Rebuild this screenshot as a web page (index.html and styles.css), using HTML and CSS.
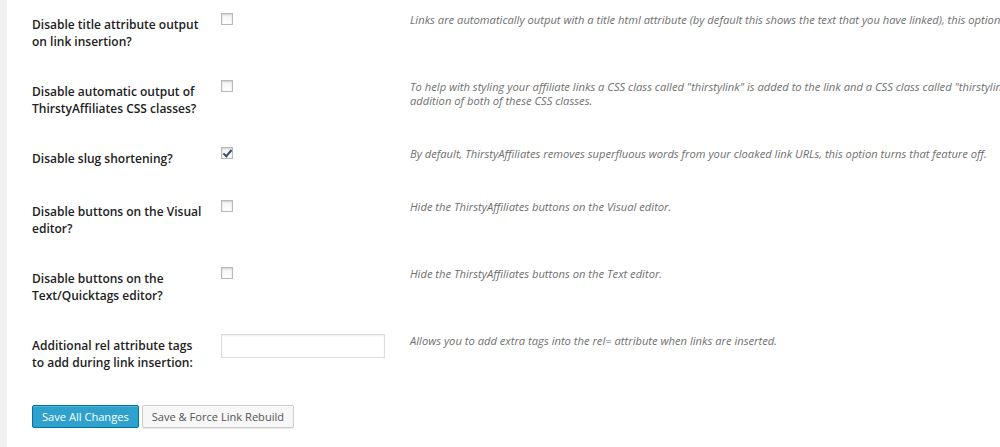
FILE: index.html
```html
<!DOCTYPE html>
<html lang="en">
<head>
<meta charset="utf-8">
<title>ThirstyAffiliates Settings</title>
<link rel="stylesheet" href="styles.css">
</head>
<body>
<div class="page">
  <div class="settings">
    <div class="row">
      <div class="label">Disable title attribute output on link insertion?</div>
      <div class="control"><input class="check" type="checkbox"></div>
      <div class="desc"><span class="line">Links are automatically output with a title html attribute (by default this shows the text that you have linked), this option lets you disable the output of the title attribute on your links.</span></div>
    </div>
    <div class="row">
      <div class="label">Disable automatic output of ThirstyAffiliates CSS classes?</div>
      <div class="control"><input class="check" type="checkbox"></div>
      <div class="desc"><span class="line">To help with styling your affiliate links a CSS class called "thirstylink" is added to the link and a CSS class called "thirstylinkimg" is added to images within the link. This option disables the</span><span class="line">addition of both of these CSS classes.</span></div>
    </div>
    <div class="row">
      <div class="label">Disable slug shortening?</div>
      <div class="control"><input class="check" type="checkbox" checked></div>
      <div class="desc"><span class="line">By default, ThirstyAffiliates removes superfluous words from your cloaked link URLs, this option turns that feature off.</span></div>
    </div>
    <div class="row">
      <div class="label">Disable buttons on the Visual editor?</div>
      <div class="control"><input class="check" type="checkbox"></div>
      <div class="desc"><span class="line">Hide the ThirstyAffiliates buttons on the Visual editor.</span></div>
    </div>
    <div class="row">
      <div class="label">Disable buttons on the Text/Quicktags editor?</div>
      <div class="control"><input class="check" type="checkbox"></div>
      <div class="desc"><span class="line">Hide the ThirstyAffiliates buttons on the Text editor.</span></div>
    </div>
    <div class="row">
      <div class="label">Additional rel attribute tags to add during link insertion:</div>
      <div class="control"><input class="text-input" type="text"></div>
      <div class="desc"><span class="line">Allows you to add extra tags into the rel= attribute when links are inserted.</span></div>
    </div>
  </div>
  <div class="actions">
    <button class="btn btn-primary" type="button">Save All Changes</button>
    <button class="btn btn-secondary" type="button">Save &amp; Force Link Rebuild</button>
  </div>
</div>
</body>
</html>
```

FILE: styles.css
```css
html, body {
  margin: 0;
  padding: 0;
  height: 100%;
  overflow: hidden;
}

body {
  background: #f1f1f1;
  font-family: "Open Sans", "Liberation Sans", sans-serif;
  color: #222;
}

.page {
  margin-left: 7px;
  background: #fff;
  height: 100%;
  padding-left: 25px;
  box-sizing: border-box;
}

.row {
  display: grid;
  grid-template-columns: 189px 189px 1fr;
  align-items: start;
  min-height: 53px;
  box-sizing: border-box;
  padding-bottom: 17px;
}

.label {
  padding-top: 16px;
  padding-right: 16px;
  font-size: 12px;
  font-weight: 600;
  line-height: 17px;
  color: #222;
}

.control {
  padding-top: 13px;
}

.check {
  appearance: none;
  -webkit-appearance: none;
  display: block;
  margin: 0;
  width: 12px;
  height: 12px;
  border: 1px solid #b4b9be;
  background: linear-gradient(#f4f4f4, #fff);
  box-shadow: inset 0 1px 2px rgba(0, 0, 0, 0.15);
  box-sizing: border-box;
  position: relative;
}

.check:checked::before {
  content: "";
  position: absolute;
  left: 3px;
  top: 0px;
  width: 3px;
  height: 7px;
  border-right: 2px solid #3a4a6b;
  border-bottom: 2px solid #3a4a6b;
  transform: rotate(40deg);
}

.text-input {
  display: block;
  margin: 0;
  width: 164px;
  height: 24px;
  border: 1px solid #ddd;
  box-shadow: inset 0 1px 2px rgba(0, 0, 0, 0.07);
  box-sizing: border-box;
  background: #fff;
}

.desc {
  padding-top: 13px;
  font-size: 11.2px;
  font-style: italic;
  line-height: 14px;
  color: #6f6f6f;
  white-space: nowrap;
}

.line {
  display: block;
}

.actions {
  display: flex;
  gap: 3px;
  padding-top: 17px;
}

.btn {
  height: 23px;
  margin: 0;
  padding: 0 9px;
  font-family: "Open Sans", "Liberation Sans", sans-serif;
  font-size: 11.1px;
  line-height: 21px;
  border-radius: 2px;
  cursor: pointer;
  box-sizing: border-box;
}

.btn-primary {
  background: #2ea2cc;
  border: 1px solid #0074a2;
  color: #fff;
  box-shadow: inset 0 1px 0 rgba(120, 200, 230, 0.5);
}

.btn-secondary {
  background: #f7f7f7;
  border: 1px solid #ccc;
  color: #555;
  box-shadow: inset 0 1px 0 #fff, 0 1px 0 rgba(0, 0, 0, 0.08);
}
```
